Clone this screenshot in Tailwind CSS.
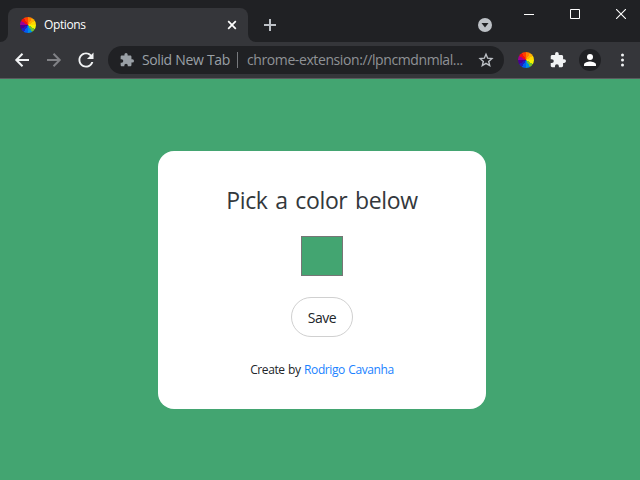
<!DOCTYPE html>
<html lang="en">
<head>
<meta charset="utf-8">
<title>Options</title>
<script src="https://cdn.jsdelivr.net/npm/@tailwindcss/browser@4"></script>
</head>
<body class="w-[640px] h-[480px] overflow-hidden flex flex-col bg-[#43a571] font-['Open_Sans','Noto_Sans',sans-serif]">
<header class="shrink-0 bg-[#202124]">
  <div class="flex h-[42px]">
    <div class="w-2 h-[34px] mt-2 bg-[#35363a] shrink-0"><div class="size-full bg-[#202124] rounded-br-lg"></div></div>
    <div class="w-[240px] h-[34px] mt-2 bg-[#35363a] rounded-t-lg flex items-center pl-3 pr-[11px] shrink-0">
      <div class="size-4 rounded-full bg-[conic-gradient(#ff8000_0_30deg,#ffb000_30deg_60deg,#ffd800_60deg_90deg,#f4f400_90deg_120deg,#70c030_120deg_150deg,#0090e0_150deg_180deg,#0060f0_180deg_210deg,#2020c0_210deg_240deg,#4a0090_240deg_270deg,#a00090_270deg_300deg,#f01010_300deg_330deg,#ff4000_330deg)]"></div>
      <span class="ml-2 text-[12px] leading-4 tracking-[-0.4px] text-white">Options</span>
      <svg class="ml-auto" width="10" height="10" viewBox="0 0 10 10" stroke="#fff" stroke-width="1.7"><path d="M1.2 1.2l7.6 7.6M8.8 1.2L1.2 8.8"/></svg>
    </div>
    <div class="w-2 h-[34px] mt-2 bg-[#35363a] shrink-0"><div class="size-full bg-[#202124] rounded-bl-lg"></div></div>
    <svg class="ml-2 mt-[19px]" width="12" height="12" viewBox="0 0 12 12" stroke="#bdc1c6" stroke-width="2"><path d="M6 0v12M0 6h12"/></svg>
    <svg class="ml-auto mt-[18px]" width="14" height="14" viewBox="0 0 14 14"><circle cx="7" cy="7" r="7" fill="#bdc1c6"/><path d="M3.500 5h7L7 9.500z" fill="#202124"/></svg>
    <div class="ml-8 mr-[14px] mt-[9px] flex gap-9 shrink-0">
      <svg width="10" height="10" viewBox="0 0 10 10" stroke="#fff"><path d="M0 5.5h10"/></svg>
      <svg width="10" height="10" viewBox="0 0 10 10" fill="none" stroke="#fff"><path d="M.5.5h9v9h-9z"/></svg>
      <svg width="10" height="10" viewBox="0 0 10 10" stroke="#fff" stroke-width="1.1"><path d="M0 0l10 10M10 0L0 10"/></svg>
    </div>
  </div>
  <div class="h-[37px] bg-[#35363a] border-b border-[#5a5b5e] flex items-center pl-[14px] pr-[14px]">
    <svg class="shrink-0" width="16" height="16" viewBox="0 0 16 16" fill="none" stroke="#f1f3f4" stroke-width="2"><path d="M15 8H2.500M8.500 1.800L2.300 8l6.200 6.200"/></svg>
    <svg class="ml-4 shrink-0" width="16" height="16" viewBox="0 0 16 16" fill="none" stroke="#818286" stroke-width="2"><path d="M1 8h12.500M7.500 1.800L13.700 8l-6.200 6.200"/></svg>
    <svg class="ml-4 shrink-0" width="16" height="16" viewBox="3.500 3.500 17 17" fill="#f1f3f4"><path d="M17.650 6.350C16.200 4.900 14.210 4 12 4c-4.420 0-7.990 3.580-7.990 8s3.570 8 7.990 8c3.730 0 6.840-2.550 7.730-6h-2.080c-.82 2.330-3.040 4-5.650 4-3.310 0-6-2.690-6-6s2.690-6 6-6c1.660 0 3.140.69 4.220 1.780L13 11h7V4z"/></svg>
    <div class="ml-[14px] w-[396px] h-7 rounded-full bg-[#202124] flex items-center pl-3 pr-[10px] shrink-0">
      <svg class="shrink-0" width="14" height="14" viewBox="1 1 22 22" fill="#9aa0a6"><path d="M20.500 11H19V7c0-1.100-.9-2-2-2h-4V3.500a2.500 2.500 0 0 0-5 0V5H4c-1.100 0-1.990.9-1.990 2v3.800H3.500a2.700 2.700 0 0 1 0 5.400H2V20c0 1.100.9 2 2 2h3.800v-1.500a2.700 2.700 0 0 1 5.400 0V22H17c1.100 0 2-.9 2-2v-4h1.500a2.500 2.500 0 0 0 0-5z"/></svg>
      <span class="ml-2 w-[95px] whitespace-nowrap text-[14px] leading-5 tracking-[-0.4px] [word-spacing:0.4px] text-[#9aa0a6]">Solid New Tab</span>
      <div class="w-px h-4 bg-[#77797d] shrink-0"></div>
      <span class="ml-[9px] whitespace-nowrap text-[14px] leading-5 tracking-[-0.4px] text-[#8f9296]">chrome-extension://lpncmdnmlal...</span>
      <svg class="ml-auto shrink-0" width="16" height="16" viewBox="0 0 16 16" fill="none" stroke="#bdc1c6" stroke-width="1.400"><path d="M8 2.300l1.700 3.900 4.200.4-3.200 2.800 1 4.200L8 11.400l-3.700 2.200 1-4.200-3.200-2.800 4.200-.4z"/></svg>
    </div>
    <div class="ml-[14px] size-4 rounded-full shrink-0 bg-[conic-gradient(#ff8000_0_30deg,#ffb000_30deg_60deg,#ffd800_60deg_90deg,#f4f400_90deg_120deg,#70c030_120deg_150deg,#0090e0_150deg_180deg,#0060f0_180deg_210deg,#2020c0_210deg_240deg,#4a0090_240deg_270deg,#a00090_270deg_300deg,#f01010_300deg_330deg,#ff4000_330deg)]"></div>
    <svg class="ml-4 shrink-0" width="16" height="16" viewBox="1 1 22 22" fill="#f1f3f4"><path d="M20.500 11H19V7c0-1.100-.9-2-2-2h-4V3.500a2.500 2.500 0 0 0-5 0V5H4c-1.100 0-1.990.9-1.990 2v3.800H3.500a2.700 2.700 0 0 1 0 5.400H2V20c0 1.100.9 2 2 2h3.800v-1.500a2.700 2.700 0 0 1 5.400 0V22H17c1.100 0 2-.9 2-2v-4h1.500a2.500 2.500 0 0 0 0-5z"/></svg>
    <div class="ml-[13px] size-[22px] rounded-full bg-[#202124] flex items-center justify-center shrink-0">
      <svg width="12" height="12" viewBox="0 0 12 12" fill="#fff"><circle cx="6" cy="3" r="3"/><path d="M0 12v-1.500C0 8.500 4 7.500 6 7.500s6 1 6 3V12z"/></svg>
    </div>
    <svg class="ml-5 shrink-0" width="3" height="14" viewBox="0 0 3 14" fill="#f1f3f4"><circle cx="1.500" cy="2" r="1.500"/><circle cx="1.500" cy="7" r="1.500"/><circle cx="1.500" cy="12" r="1.500"/></svg>
  </div>
</header>
<main class="flex-1 pt-[72px] pl-[158px]">
  <section class="w-[328px] h-[258px] rounded-2xl bg-white flex flex-col items-center text-[#212529]">
    <h1 class="mt-[34px] h-[31px] text-[23px] leading-[31px] font-normal tracking-[-0.35px] [word-spacing:2px] whitespace-nowrap text-[#33383c]">Pick a color below</h1>
    <div class="mt-5 w-[42px] h-10 border border-[#767676] bg-[#43a571]"></div>
    <button class="mt-[21px] w-[62px] h-10 rounded-full border border-[#d0d0d0] text-[14px] tracking-[-0.5px]">Save</button>
    <p class="mt-6 text-[12px] leading-[18px] tracking-[-0.4px] [word-spacing:0.7px] whitespace-nowrap">Create by <a class="text-[#1a82ff]">Rodrigo Cavanha</a></p>
  </section>
</main>
</body>
</html>
